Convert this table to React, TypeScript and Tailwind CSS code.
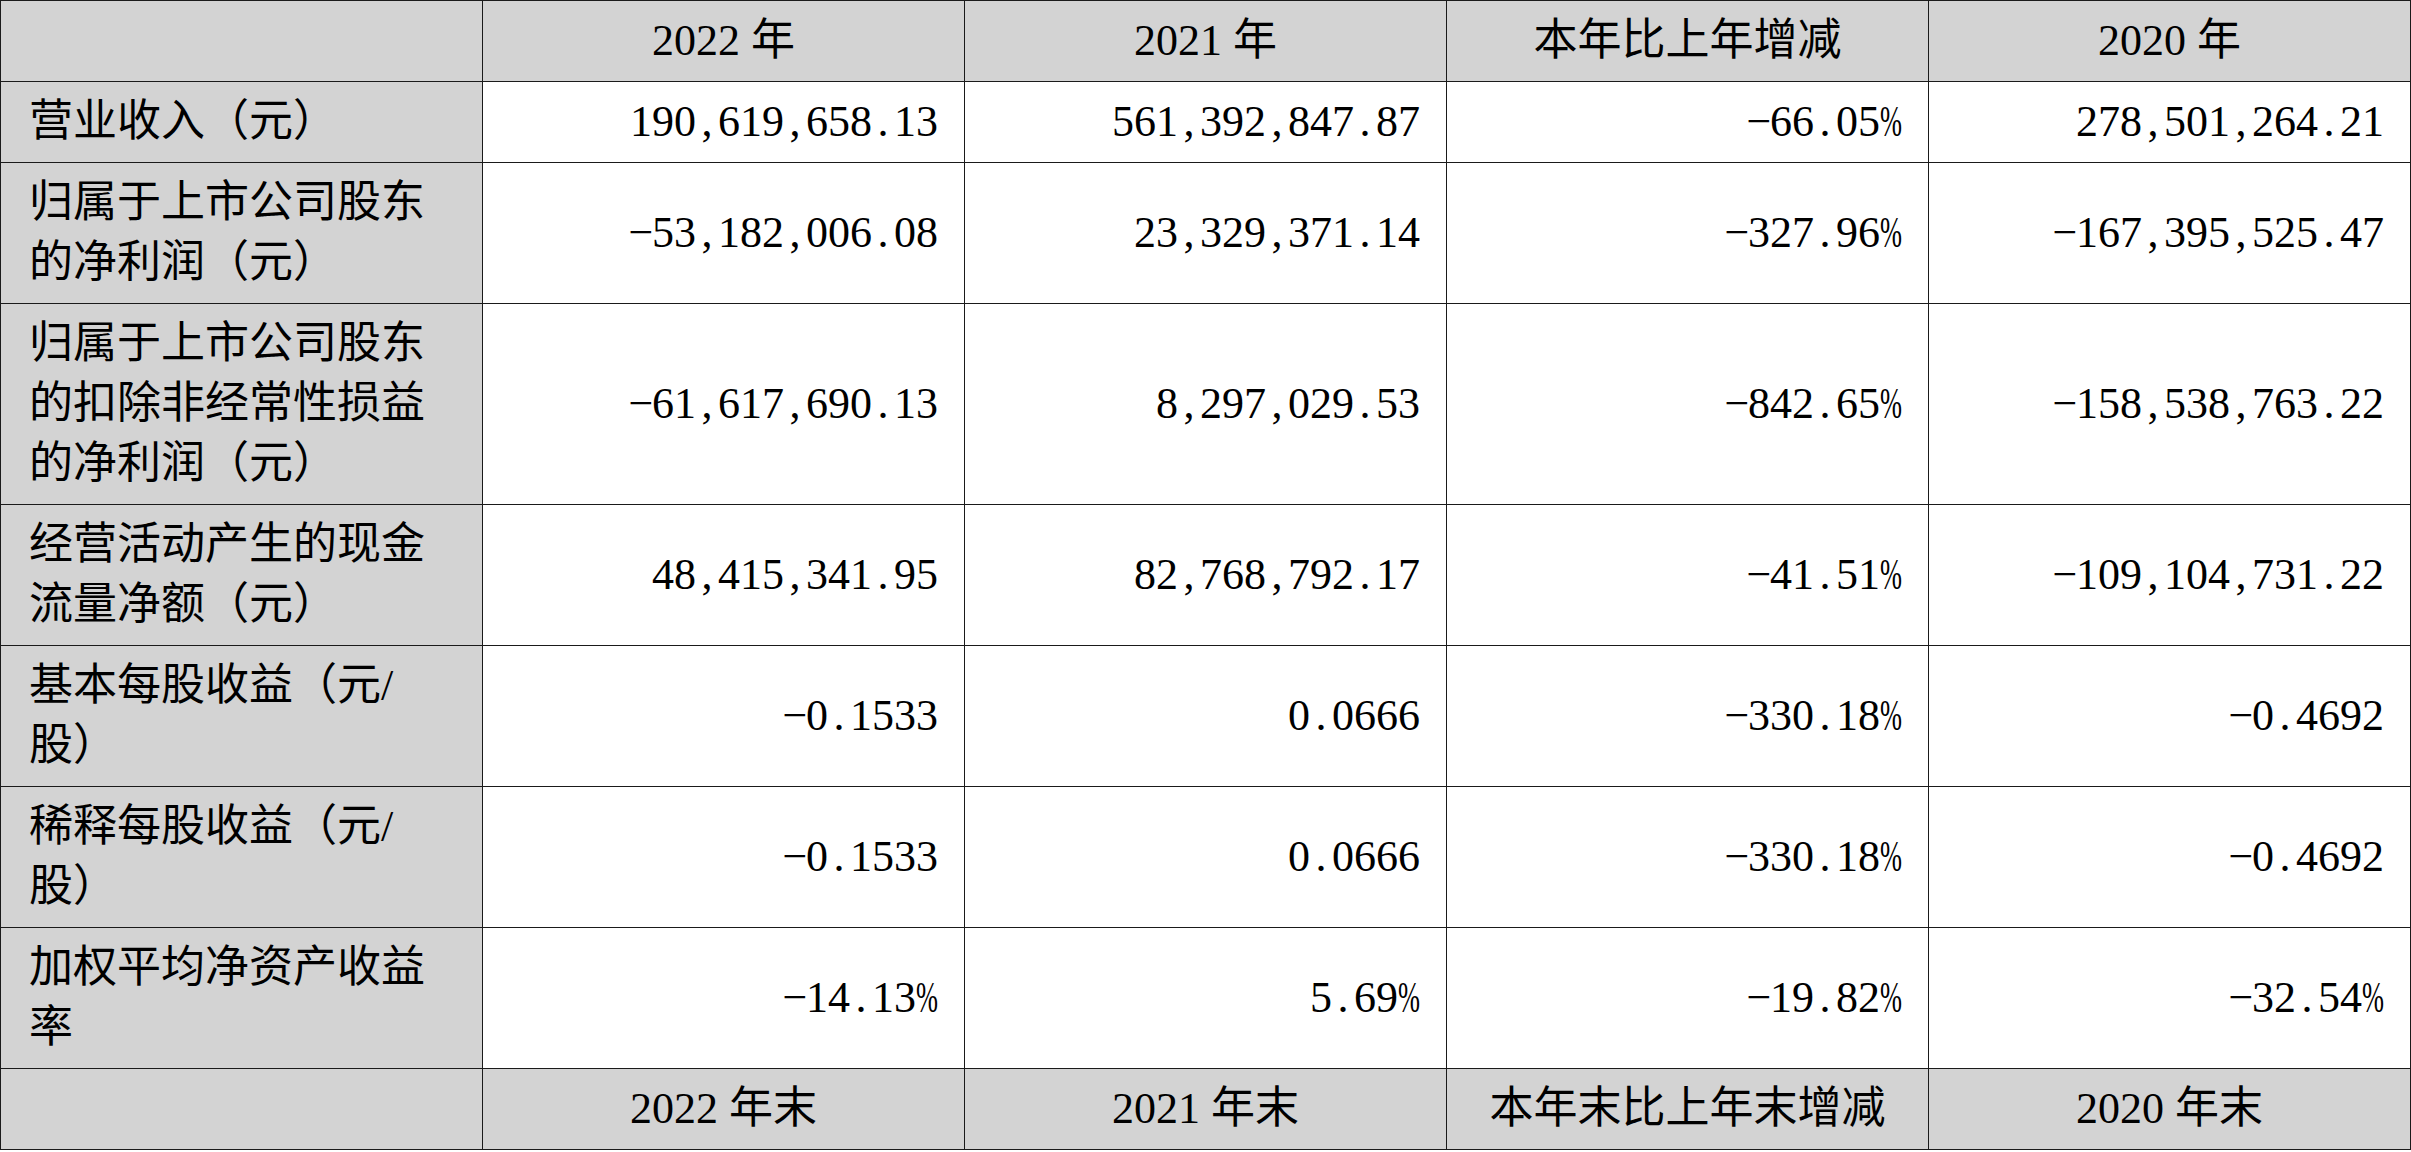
import React from "react";

type Row = {
  label: string[];
  values: string[];
};

const rows: Row[] = [
  { label: ["营业收入（元）"], values: ["190,619,658.13", "561,392,847.87", "-66.05%", "278,501,264.21"] },
  {
    label: ["归属于上市公司股东", "的净利润（元）"],
    values: ["-53,182,006.08", "23,329,371.14", "-327.96%", "-167,395,525.47"],
  },
  {
    label: ["归属于上市公司股东", "的扣除非经常性损益", "的净利润（元）"],
    values: ["-61,617,690.13", "8,297,029.53", "-842.65%", "-158,538,763.22"],
  },
  {
    label: ["经营活动产生的现金", "流量净额（元）"],
    values: ["48,415,341.95", "82,768,792.17", "-41.51%", "-109,104,731.22"],
  },
  { label: ["基本每股收益（元/", "股）"], values: ["-0.1533", "0.0666", "-330.18%", "-0.4692"] },
  { label: ["稀释每股收益（元/", "股）"], values: ["-0.1533", "0.0666", "-330.18%", "-0.4692"] },
  { label: ["加权平均净资产收益", "率"], values: ["-14.13%", "5.69%", "-19.82%", "-32.54%"] },
];

const headers = ["2022 年", "2021 年", "本年比上年增减", "2020 年"];
const footers = ["2022 年末", "2021 年末", "本年末比上年末增减", "2020 年末"];

// 数字按半角等宽排（仿宋体表格）
function Num({ text }: { text: string }) {
  return (
    <span className="inline-flex">
      {[...text].map((c, i) => (
        <span
          key={i}
          className={c === "%" ? "inline-flex w-[0.5em] justify-center scale-x-60" : "inline-flex w-[0.5em] justify-center"}
        >
          {c === "-" ? "−" : c}
        </span>
      ))}
    </span>
  );
}

function HeadCell({ children }: { children?: React.ReactNode }) {
  return (
    <div className="bg-[#d3d3d3] border-r border-b border-[#1a1a1a] py-[10px] flex items-center justify-center whitespace-nowrap">
      {children}
    </div>
  );
}

export default function App() {
  return (
    <div className="w-[2411px] h-[1152px] bg-white overflow-hidden">
      <div className="grid grid-cols-5 border-l border-t border-[#1a1a1a] text-[44px] leading-[60px] text-black font-['Liberation_Serif','Noto_Sans_CJK_SC',serif]">
        {/* header */}
        <HeadCell />
        {headers.map((h) => (
          <HeadCell key={h}>{h}</HeadCell>
        ))}

        {rows.map((row, ri) => (
          <React.Fragment key={ri}>
            <div className="bg-[#d3d3d3] border-r border-b border-[#1a1a1a] py-[10px] pl-[28px]">
              {row.label.map((line, li) => (
                <div key={li} className="whitespace-nowrap">
                  {line}
                </div>
              ))}
            </div>
            {row.values.map((v, vi) => (
              <div
                key={vi}
                className="bg-white border-r border-b border-[#1a1a1a] py-[10px] pr-[26px] flex items-center justify-end"
              >
                <Num text={v} />
              </div>
            ))}
          </React.Fragment>
        ))}

        {/* footer */}
        <HeadCell />
        {footers.map((f) => (
          <HeadCell key={f}>{f}</HeadCell>
        ))}
      </div>
    </div>
  );
}
